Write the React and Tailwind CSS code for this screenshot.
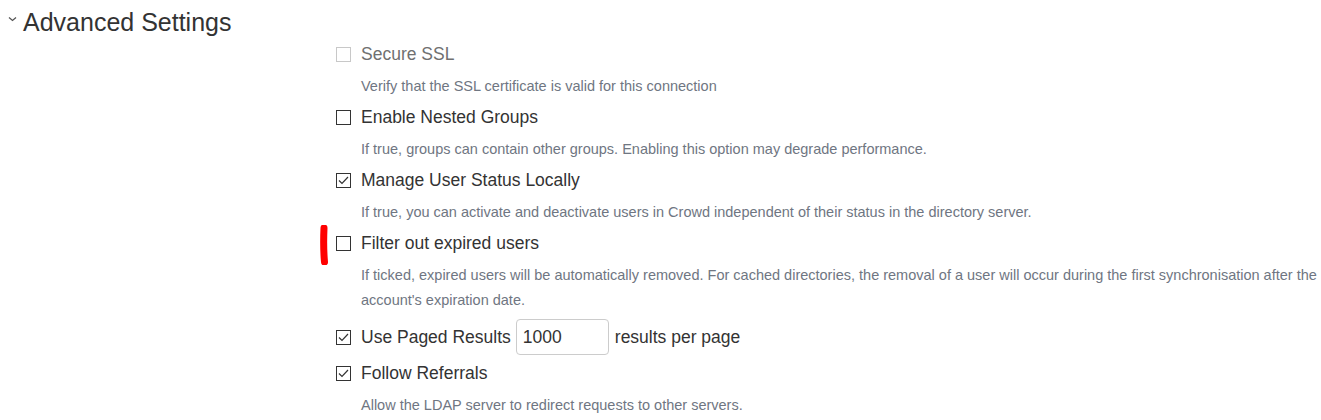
import React from 'react';

const options = [
    { label: 'Secure SSL', desc: 'Verify that the SSL certificate is valid for this connection', checked: false, disabled: true },
    { label: 'Enable Nested Groups', desc: 'If true, groups can contain other groups. Enabling this option may degrade performance.', checked: false },
    { label: 'Manage User Status Locally', desc: 'If true, you can activate and deactivate users in Crowd independent of their status in the directory server.', checked: true },
    {
        label: 'Filter out expired users',
        desc: "If ticked, expired users will be automatically removed. For cached directories, the removal of a user will occur during the first synchronisation after the account's expiration date.",
        checked: false,
        marked: true,
    },
    { label: 'Use Paged Results', checked: true, paged: true },
    { label: 'Follow Referrals', desc: 'Allow the LDAP server to redirect requests to other servers.', checked: true },
];

function Checkbox({ checked, disabled }) {
    return (
        <span
            className={`flex h-[15px] w-[15px] shrink-0 items-center justify-center border bg-white ${
                disabled ? 'border-[#c8c8c8]' : 'border-[#333]'
            }`}
        >
            {checked && (
                <svg width="11" height="9" viewBox="0 0 11 9" fill="none">
                    <path d="M1 4.5 L4 7.5 L10 1" stroke="#333" strokeWidth="1.2" />
                </svg>
            )}
        </span>
    );
}

export default function App() {
    return (
        <div className="h-[420px] w-[1321px] overflow-hidden bg-white text-[#333]" style={{ fontFamily: '"Liberation Sans", Arial, sans-serif' }}>
            {/* Heading */}
            <div className="flex items-center pl-[8px] pt-[8px]">
                <svg width="9" height="6" viewBox="0 0 9 6" className="mr-[6px] mt-[-6px]">
                    <path d="M1 1.5 L4.5 4.5 L8 1.5" stroke="#555" strokeWidth="1.3" fill="none" />
                </svg>
                <h2 className="text-[25px] leading-[28px]">Advanced Settings</h2>
            </div>

            {/* Options */}
            <div className="ml-[336px] mt-[6px] w-[985px]">
                {options.map((opt) => (
                    <div key={opt.label} className="relative mb-[6.5px]">
                        {opt.marked && (
                            <svg width="12" height="40" viewBox="0 0 12 40" className="absolute left-[-18px] top-[-6px]">
                                <path d="M6 3 C5.5 14 5.5 26 6.5 37" stroke="#f00" strokeWidth="7" strokeLinecap="round" fill="none" />
                            </svg>
                        )}
                        {opt.paged ? (
                            <div className="flex h-[36px] items-center">
                                <Checkbox checked={opt.checked} />
                                <span className="ml-[10px] text-[17.5px]">{opt.label}</span>
                                <input
                                    readOnly
                                    value="1000"
                                    className="ml-[5px] h-[36px] w-[93px] rounded-[4px] border border-[#ccc] px-[6px] text-[17.5px] text-[#333] outline-none"
                                />
                                <span className="ml-[6px] text-[17.5px]">results per page</span>
                            </div>
                        ) : (
                            <div className="flex h-[24px] items-center">
                                <Checkbox checked={opt.checked} disabled={opt.disabled} />
                                <span className={`ml-[10px] text-[17.5px] ${opt.disabled ? 'text-[#707070]' : ''}`}>{opt.label}</span>
                            </div>
                        )}
                        {opt.desc && (
                            <p className="mt-[7.5px] pl-[25px] text-[14.5px] leading-[25px] text-[#6f7682]">{opt.desc}</p>
                        )}
                    </div>
                ))}
            </div>
        </div>
    );
}
